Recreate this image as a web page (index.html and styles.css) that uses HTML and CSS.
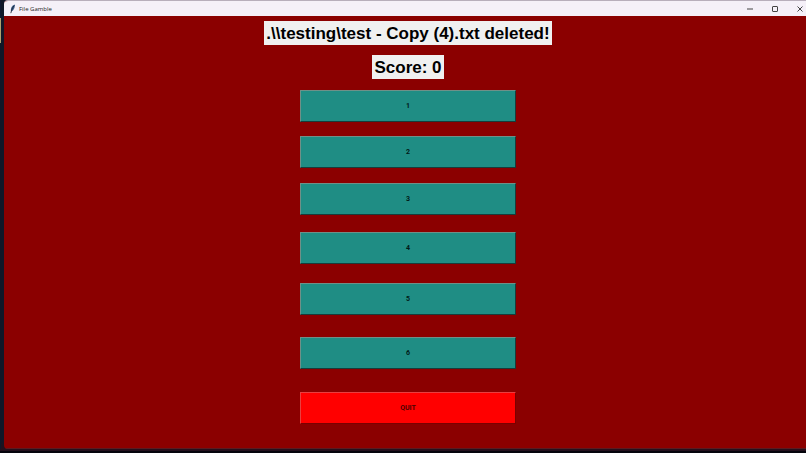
FILE: index.html
```html
<!DOCTYPE html>
<html lang="en">
<head>
    <meta charset="UTF-8">
    <meta name="viewport" content="width=device-width, initial-scale=1.0">
    <title>File Gamble</title>
    <link rel="stylesheet" href="styles.css">
</head>
<body>
    <div class="desktop-edge"></div>
    <div class="window">
        <header class="title-bar">
            <svg class="app-icon" viewBox="0 0 8 12" aria-hidden="true">
                <path d="M7 1C4 1 2 4 2 8l1 1c2-1 4-4 4-8z" fill="#3d5f8c"/>
                <path d="M6 2C4 4 3 7 2 11" fill="none" stroke="#18202e" stroke-width="1"/>
            </svg>
            <span class="title">File Gamble</span>
            <div class="window-controls">
                <button type="button" aria-label="Minimize">
                    <svg viewBox="0 0 8 8"><path d="M1 4h6"/></svg>
                </button>
                <button type="button" aria-label="Maximize">
                    <svg viewBox="0 0 8 8"><rect x="1.5" y="1.5" width="5" height="5" rx="0.5"/></svg>
                </button>
                <button type="button" aria-label="Close">
                    <svg viewBox="0 0 8 8"><path d="M1.5 1.5l5 5M6.5 1.5l-5 5"/></svg>
                </button>
            </div>
        </header>
        <main class="game">
            <div class="label">.\\testing\test - Copy (4).txt deleted!</div>
            <div class="label">Score: 0</div>
            <div class="buttons">
                <button type="button">1</button>
                <button type="button">2</button>
                <button type="button">3</button>
                <button type="button">4</button>
                <button type="button">5</button>
                <button type="button">6</button>
                <button type="button" class="quit">QUIT</button>
            </div>
        </main>
    </div>
</body>
</html>
```
FILE: styles.css
```css
* {
    box-sizing: border-box;
}
html, body {
    height: 100%;
    margin: 0;
    overflow: hidden;
}
body {
    display: flex;
    padding-bottom: 4px;
    background: linear-gradient(to top, #05040c 2px, #24101c 2px, #24101c 4px, #101828 14px);
    font-family: "Liberation Sans", Arial, sans-serif;
}
.desktop-edge {
    width: 4px;
    background: linear-gradient(#101830 18px, #b0a070 18px, #b0a070 43px, #101828 43px) no-repeat left / 1px 100%;
}
/* the window runs a little past the right edge of the screen */
.window {
    flex: 1;
    display: flex;
    flex-direction: column;
    margin-right: -6px;
    border-top: 1px solid #b8aebb;
    border-radius: 4px 0 0 4px;
    background-color: #8b0000;
    overflow: hidden;
}
.title-bar {
    display: flex;
    align-items: center;
    height: 15px;
    padding-left: 5px;
    background-color: #f5f0f8;
    color: #1c1c1c;
}
.app-icon {
    width: 7px;
    height: 10px;
}
.title {
    margin-left: 3px;
    font-family: "Open Sans", "Segoe UI", sans-serif;
    font-size: 6px;
    line-height: 12px;
}
.window-controls {
    display: flex;
    margin-left: auto;
}
.window-controls button {
    display: flex;
    justify-content: center;
    align-items: center;
    width: 25px;
    height: 15px;
    padding: 0;
    border: none;
    background: none;
}
.window-controls svg {
    width: 8px;
    height: 8px;
    fill: none;
    stroke: #444;
    stroke-width: 1;
}
.game {
    flex: 1;
    display: flex;
    flex-direction: column;
    align-items: center;
    padding-top: 5px;
    border-bottom: 1px solid #5c1a20;
}
.label {
    margin-bottom: 10px;
    padding: 1px 2px 0;
    background-color: #f0f0f0;
    color: #000;
    font-size: 17px;
    font-weight: bold;
    line-height: 23px;
}
.buttons {
    display: flex;
    flex-direction: column;
    width: 26%;
    min-width: 216px;
    margin-top: 1px;
}
.buttons button {
    height: 32px;
    padding: 0;
    border: 1px solid;
    border-color: #6f9088 #183c3a #183c3a #6f9088;
    background-color: #1f8d84;
    color: #001a18;
    font-family: Roboto, sans-serif;
    font-size: 7px;
    font-weight: bold;
}
/* every row is spaced a bit wider than the one above */
.buttons button:nth-child(2) {
    margin-top: 14px;
}
.buttons button:nth-child(3) {
    margin-top: 15px;
}
.buttons button:nth-child(4) {
    margin-top: 17px;
}
.buttons button:nth-child(5) {
    margin-top: 19px;
}
.buttons button:nth-child(6) {
    margin-top: 22px;
}
.buttons button:nth-child(7) {
    margin-top: 23px;
}
.buttons .quit {
    border-color: #e84040 #7a0000 #7a0000 #e84040;
    background-color: #f00;
    color: #500000;
}
```
